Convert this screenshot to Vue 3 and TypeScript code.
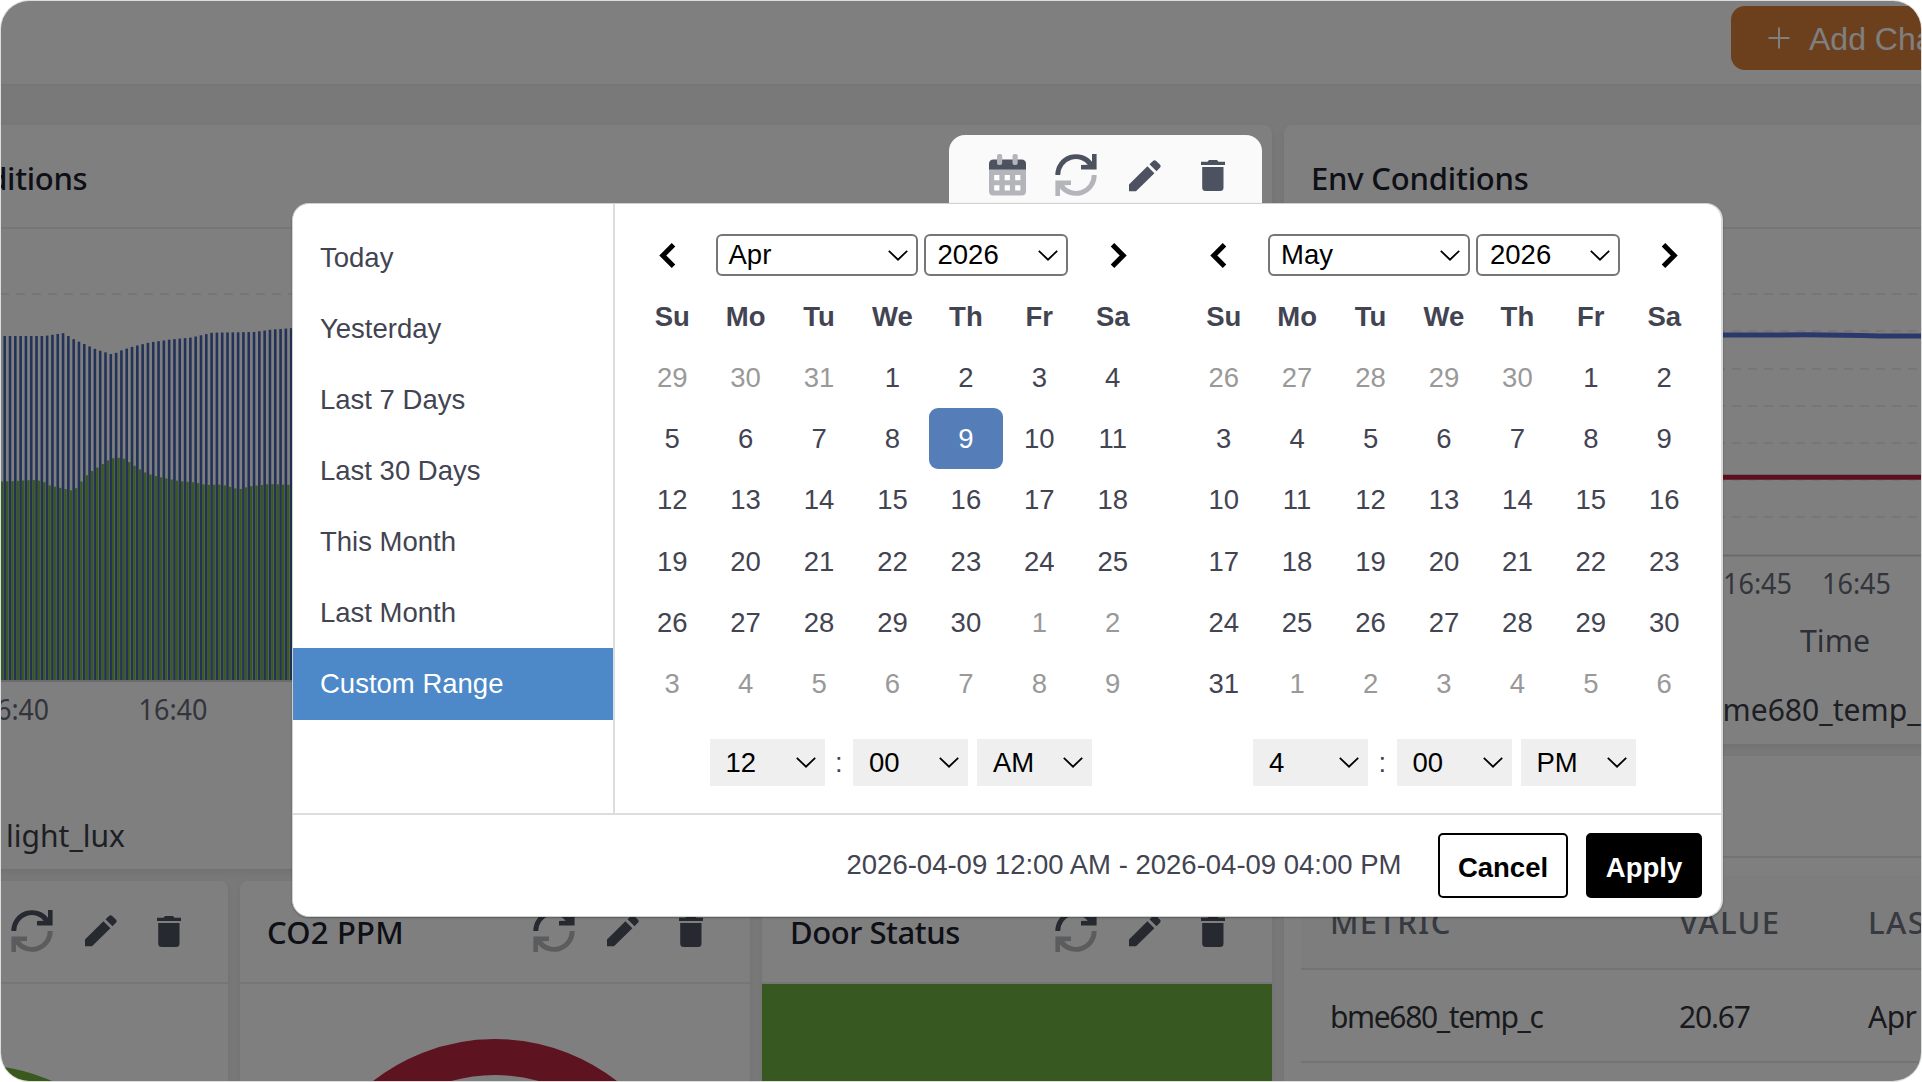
<script setup lang="ts">
import { computed } from 'vue'

interface Day { n: number; off?: boolean; active?: boolean }
interface CalendarPanel {
  id: string
  month: string
  year: string
  weeks: Day[][]
  time: string[]
}

const ranges = ['Today', 'Yesterday', 'Last 7 Days', 'Last 30 Days', 'This Month', 'Last Month', 'Custom Range']
const selectedRange = 'Custom Range'
const weekdays = ['Su', 'Mo', 'Tu', 'We', 'Th', 'Fr', 'Sa']

function buildWeeks(lead: number[], length: number, active?: number): Day[][] {
  const days: Day[] = lead.map((n) => ({ n, off: true }))
  for (let n = 1; n <= length; n++) days.push({ n, active: n === active })
  let next = 1
  while (days.length < 42) days.push({ n: next++, off: true })
  const weeks: Day[][] = []
  for (let i = 0; i < 42; i += 7) weeks.push(days.slice(i, i + 7))
  return weeks
}

const panels: CalendarPanel[] = [
  { id: 'start', month: 'Apr', year: '2026', weeks: buildWeeks([29, 30, 31], 30, 9), time: ['12', '00', 'AM'] },
  { id: 'end', month: 'May', year: '2026', weeks: buildWeeks([26, 27, 28, 29, 30], 31), time: ['4', '00', 'PM'] },
]

type Point = [number, number]
const lightCurve: Point[] = [[0, 336], [43, 336], [63, 333], [69, 337.5], [74, 340], [84, 344.5], [95, 349.5], [103, 352], [111, 354.5], [121, 350], [132, 346.5], [148, 342.5], [169, 339.5], [190, 337.5], [211, 332.7], [253, 332], [269, 329.7], [292, 328]]
const gasCurve: Point[] = [[0, 481.5], [29, 480], [39, 481], [44, 485], [55, 487.5], [70, 491], [76, 484], [80, 478], [86, 472.5], [96, 466], [107, 458.5], [118, 457.5], [123, 460.5], [134, 468], [139, 471.5], [149, 475.5], [165, 479], [175, 481], [192, 482.5], [202, 485], [218, 484.5], [235, 489.5], [245, 486.5], [265, 484], [292, 485]]

function sample(curve: Point[], x: number): number {
  for (let i = 1; i < curve.length; i++) {
    const [x0, y0] = curve[i - 1]
    const [x1, y1] = curve[i]
    if (x <= x1) return y0 + ((y1 - y0) * (x - x0)) / (x1 - x0)
  }
  return curve[curve.length - 1][1]
}

const bars = computed(() =>
  Array.from({ length: 56 }, (_, i) => {
    const x = -1.9 + i * 5.305
    return { x, light: sample(lightCurve, Math.max(0, x)), gas: sample(gasCurve, Math.max(0, x)) }
  }),
)
const gridLines = [294, 331, 369, 406, 443, 480, 517]
</script>

<template>
  <div class="stage">
    <svg class="defs" width="0" height="0" aria-hidden="true">
      <symbol id="i-refresh" viewBox="0 0 42 42">
        <path d="M2.8 21 A18.2 18.2 0 0 1 36 10.5" fill="none" stroke="var(--ink)" stroke-width="4.9" />
        <path d="M37 0h4.6v15.6H26V11l6.8-.3L37 8z" fill="var(--ink)" />
        <path d="M39.2 21 A18.2 18.2 0 0 1 6 31.5" fill="none" stroke="var(--soft)" stroke-width="4.9" />
        <path d="M5 42H.4V26.4H16V31l-6.8.3L5 34z" fill="var(--soft)" />
      </symbol>
      <symbol id="i-pencil" viewBox="0 0 32 32">
        <path d="M0 24.6 18.4 6.2l7 7L7 31.2H0z" fill="var(--ink)" />
        <path d="M20.5 4.3 24 .9q1.6-1.5 3.2 0l3.7 3.7q1.5 1.6 0 3.2l-3.4 3.5z" fill="var(--ink)" />
      </symbol>
      <symbol id="i-trash" viewBox="0 0 24 31">
        <path d="M0 1.8h6.5L8 0h8l1.500 1.800H24V5H0z" fill="var(--ink)" />
        <path d="M1.200 7h21.300v20.500q0 3.500-3.500 3.500H4.700q-3.500 0-3.500-3.500z" fill="var(--ink)" />
      </symbol>
      <symbol id="i-down" viewBox="0 0 20 11">
        <path d="M.8.8 10 9.700 19.200.8" fill="none" stroke="#000" stroke-width="1.800" />
      </symbol>
      <symbol id="i-left" viewBox="0 0 17 25">
        <path d="M14.500 1.800 3.800 12.500l10.700 10.700" fill="none" stroke="#000" stroke-width="5" />
      </symbol>
      <symbol id="i-right" viewBox="0 0 17 25">
        <path d="M2.500 1.800l10.700 10.700L2.500 23.200" fill="none" stroke="#000" stroke-width="5" />
      </symbol>
    </svg>

    <div class="frame">
      <header class="topbar">
        <button class="add">
          <svg width="22" height="22" viewBox="0 0 22 22"><path d="M11 0.500v21M0.500 11h21" stroke="#fff" stroke-width="2" /></svg>
          <span>Add Chart</span>
        </button>
      </header>

      <main class="board">
        <section class="col main-col">
          <article class="card wide">
            <div class="card-head first"><h2 class="clipped">Conditions</h2></div>
            <svg class="plot" width="300" height="640" viewBox="0 229 300 640">
              <line x1="0" x2="300" y1="294" y2="294" class="dash" />
              <g v-for="(b, i) in bars" :key="i">
                <rect :x="b.x" :y="b.light" width="2.600" :height="680.500 - b.light" fill="#4465b0" />
                <rect :x="b.x + 2.500" :y="b.gas" width="2.500" :height="680.500 - b.gas" fill="#77b03f" />
              </g>
              <line x1="0" x2="300" y1="681" y2="681" stroke="#d3d6dc" stroke-width="2" />
              <text x="-19" y="719.800" textLength="68" lengthAdjust="spacingAndGlyphs" class="tick">16:40</text>
              <text x="138.500" y="719.800" textLength="69" lengthAdjust="spacingAndGlyphs" class="tick">16:40</text>
              <text x="6" y="846.800" textLength="119" lengthAdjust="spacingAndGlyphs" class="legend">light_lux</text>
            </svg>
          </article>

          <div class="row">
            <article class="card small">
              <div class="card-head">
                <div class="actions">
                  <svg class="ic refresh"><use href="#i-refresh" /></svg>
                  <svg class="ic pencil"><use href="#i-pencil" /></svg>
                  <svg class="ic trash"><use href="#i-trash" /></svg>
                </div>
              </div>
              <svg class="gauge" width="510" height="97" viewBox="0 984 510 97">
                <circle cx="255" cy="1262.500" r="180" fill="none" stroke="#77b03f" stroke-width="36" />
              </svg>
            </article>
            <article class="card small">
              <div class="card-head">
                <h2 class="t-co2">CO2 PPM</h2>
                <div class="actions">
                  <svg class="ic refresh"><use href="#i-refresh" /></svg>
                  <svg class="ic pencil"><use href="#i-pencil" /></svg>
                  <svg class="ic trash"><use href="#i-trash" /></svg>
                </div>
              </div>
              <svg class="gauge" width="510" height="97" viewBox="0 984 510 97">
                <circle cx="255" cy="1237" r="180" fill="none" stroke="#bb2740" stroke-width="36" />
              </svg>
            </article>
            <article class="card small">
              <div class="card-head">
                <h2 class="t-door">Door Status</h2>
                <div class="actions">
                  <svg class="ic refresh"><use href="#i-refresh" /></svg>
                  <svg class="ic pencil"><use href="#i-pencil" /></svg>
                  <svg class="ic trash"><use href="#i-trash" /></svg>
                </div>
              </div>
              <div class="door"></div>
            </article>
          </div>
        </section>

        <section class="col side-col">
          <article class="card env">
            <div class="card-head first"><h2 class="t-env">Env Conditions</h2></div>
            <svg class="plot" width="638" height="515" viewBox="1284 229 638 515">
              <line v-for="y in gridLines" :key="y" x1="1300" x2="1922" :y1="y" :y2="y" class="dash" />
              <line x1="1300" x2="1922" y1="555.500" y2="555.500" stroke="#d3d6dc" stroke-width="2" />
              <path d="M1300 335h480c50-1.500 70 1.500 142 1" fill="none" stroke="#5470d6" stroke-width="5" />
              <path d="M1300 477.200h622" fill="none" stroke="#b8213f" stroke-width="5" />
              <text x="1723" y="593.700" textLength="69" lengthAdjust="spacingAndGlyphs" class="tick">16:45</text>
              <text x="1822" y="593.700" textLength="69" lengthAdjust="spacingAndGlyphs" class="tick">16:45</text>
              <text x="1800" y="651.700" textLength="70" lengthAdjust="spacingAndGlyphs" class="legend dim">Time</text>
              <text x="1704" y="721" textLength="231" lengthAdjust="spacingAndGlyphs" class="legend">bme680_temp_c</text>
            </svg>
          </article>
          <article class="card metrics">
            <div class="metrics-head"></div>
            <table>
              <thead>
                <tr><th>METRIC</th><th>VALUE</th><th>LAST</th></tr>
              </thead>
              <tbody>
                <tr><td class="name">bme680_temp_c</td><td>20.67</td><td class="when">Apr 9</td></tr>
                <tr class="rest"><td></td><td></td><td></td></tr>
              </tbody>
            </table>
          </article>
        </section>
      </main>

      <div class="backdrop"></div>
    </div>

    <div class="toolbar">
      <svg width="37" height="42" viewBox="0 0 37 42">
        <path d="M0 15h37v22q0 4.500-4.500 4.500h-28Q0 41.500 0 37z" fill="#b3b5ba" />
        <path d="M0 15.500V10q0-4.500 4.500-4.500h28q4.500 0 4.500 4.500v5.500z" fill="#4d5260" />
        <rect x="8" y="0" width="5.200" height="11" rx="2" fill="#b3b5ba" />
        <rect x="23.500" y="0" width="5.200" height="11" rx="2" fill="#b3b5ba" />
        <path d="M5.200 21h5.200v5.200H5.200zM15.700 21h5.200v5.200h-5.200zM26.200 21h5.200v5.200h-5.200zM5.200 31.300h5.200v5.200H5.200zM15.700 31.300h5.200v5.200h-5.200zM26.200 31.300h5.200v5.200h-5.200z" fill="#fff" />
      </svg>
      <svg class="ic refresh"><use href="#i-refresh" /></svg>
      <svg class="ic pencil"><use href="#i-pencil" /></svg>
      <svg class="ic trash"><use href="#i-trash" /></svg>
    </div>

    <div class="picker">
      <div class="picker-body">
        <ul class="ranges">
          <li v-for="r in ranges" :key="r" :class="{ active: r === selectedRange }">{{ r }}</li>
        </ul>
        <div class="calendars">
          <section v-for="p in panels" :key="p.id" class="calendar" :class="p.id">
            <div class="nav">
              <span class="arrow prev"><svg width="17" height="25"><use href="#i-left" /></svg></span>
              <span class="pick month">{{ p.month }}<svg width="20" height="11"><use href="#i-down" /></svg></span>
              <span class="pick year">{{ p.year }}<svg width="20" height="11"><use href="#i-down" /></svg></span>
              <span class="arrow next"><svg width="17" height="25"><use href="#i-right" /></svg></span>
            </div>
            <div class="week head"><span v-for="d in weekdays" :key="d">{{ d }}</span></div>
            <div v-for="(w, wi) in p.weeks" :key="wi" class="week">
              <span v-for="(d, di) in w" :key="di" :class="{ off: d.off, active: d.active }">{{ d.n }}</span>
            </div>
            <div class="time">
              <span class="tsel">{{ p.time[0] }}<svg width="20" height="11"><use href="#i-down" /></svg></span>
              <span class="colon">:</span>
              <span class="tsel">{{ p.time[1] }}<svg width="20" height="11"><use href="#i-down" /></svg></span>
              <span class="tsel last">{{ p.time[2] }}<svg width="20" height="11"><use href="#i-down" /></svg></span>
            </div>
          </section>
        </div>
      </div>
      <footer class="picker-foot">
        <span class="summary">2026-04-09 12:00 AM - 2026-04-09 04:00 PM</span>
        <button class="btn cancel">Cancel</button>
        <button class="btn apply">Apply</button>
      </footer>
    </div>
  </div>
</template>

<style>
html, body { margin: 0; background: #fff; overflow: hidden; }
</style>

<style scoped>
* { box-sizing: border-box; }
.stage {
  position: relative;
  width: 1922px;
  height: 1082px;
  padding: 1px;
  overflow: hidden;
  background: #fff;
  font-family: "Liberation Sans", Arial, sans-serif;
}
.defs { position: absolute; }
.frame {
  position: relative;
  width: 1920px;
  height: 1080px;
  overflow: hidden;
  border-radius: 28px;
  background: #f3f3f4;
  box-shadow: 0 0 0 1px #dcdedd;
  font-family: "Noto Sans", "Open Sans", sans-serif;
}
.backdrop { position: absolute; inset: 0; background: rgba(0, 0, 0, .5); }

.topbar {
  display: flex;
  height: 85px;
  padding: 5px 0 0 1730px;
  background: #fff;
  border-bottom: 2px solid #ebecee;
}
.add {
  display: flex;
  flex: none;
  align-items: center;
  gap: 19px;
  width: 240px;
  height: 64px;
  padding: 0 0 0 37px;
  border: 0;
  border-radius: 14px;
  background: #d8803a;
  color: #fff;
  font: 32px/64px "Liberation Sans", Arial, sans-serif;
  white-space: nowrap;
}
.add span { padding-top: 1px; }

.board {
  display: flex;
  gap: 12px;
  width: 2240px;
  margin: 39px 0 0 -283px;
}
.col { display: flex; flex-direction: column; gap: 12px; }
.main-col { width: 1554px; }
.side-col { width: 674px; }
.card {
  overflow: hidden;
  border-radius: 8px;
  background: #fff;
  box-shadow: 0 3px 8px rgba(0, 0, 0, .08);
}
.wide { height: 744px; }
.env { height: 619px; }
.metrics { height: 400px; padding-left: 17px; }
.row { display: flex; gap: 12px; }
.small { width: 510px; height: 240px; }

.card-head {
  display: flex;
  align-items: center;
  justify-content: space-between;
  height: 103px;
  padding: 0 47px 0 27px;
  border-bottom: 2px solid #ecedef;
}
.card-head.first { height: 104px; padding-top: 3px; }
.actions { display: flex; align-items: center; margin-left: auto; height: 42px; margin-top: -1px; }
h2 {
  margin: 0;
  color: #1d2130;
  font-size: 31px;
  font-weight: 500;
  line-height: 40px;
  white-space: nowrap;
}
.clipped { margin-left: 186px; letter-spacing: -.3px; }
.t-env { letter-spacing: -.2px; }
.t-co2 { letter-spacing: .2px; }
.t-door { padding-left: 1px; letter-spacing: -.45px; }
.plot { display: block; }
.wide .plot { margin-left: 282px; }
.gauge { display: block; }
.door { height: 137px; background: #71b145; }

.dash { stroke: #ededf0; stroke-width: 2; stroke-dasharray: 9 7; }
.tick { font-size: 28.500px; fill: #666b7a; }
.legend { font-size: 31px; fill: #3b3f4b; }
.legend.dim { fill: #5a5f6c; }

.metrics-head { height: 102px; margin-left: -17px; border-bottom: 2px solid #e6e7ea; margin-bottom: 18px; }
table { width: 657px; border-collapse: collapse; table-layout: fixed; }
th, td { padding: 0 0 0 29px; text-align: left; white-space: nowrap; border-bottom: 2px solid #e6e7ea; }
th:nth-child(1) { width: 349px; }
th:nth-child(2) { width: 189px; }
th { height: 93px; background: #fbfbfc; color: #6f7480; font-size: 31px; font-weight: 500; letter-spacing: 1.400px; }
td { height: 93px; color: #33353c; font-size: 30px; letter-spacing: -1.200px; padding-top: 2px; }
td.name { letter-spacing: -1.350px; }
td.when { letter-spacing: -.5px; }

.ic { --ink: #4d5260; --soft: #b3b5ba; flex: none; }
.card .ic { --ink: #4d5260; --soft: #b6b8bb; }
.ic.refresh { width: 42px; height: 42px; }
.ic.pencil { width: 32px; height: 32px; margin-left: 32px; }
.ic.trash { width: 24px; height: 31px; margin-left: 40px; }

.toolbar {
  position: absolute;
  left: 949px;
  top: 135px;
  display: flex;
  align-items: flex-start;
  width: 313px;
  height: 84px;
  padding: 19px 0 0 40px;
  border-radius: 16px 16px 0 0;
  background: #fafafa;
}
.toolbar .refresh { margin-left: 29px; }
.toolbar .pencil, .toolbar .trash { margin-top: 6px; }

.picker {
  position: absolute;
  left: 292px;
  top: 203px;
  width: 1431px;
  height: 714px;
  overflow: hidden;
  border: 1px solid #cfd1d1;
  border-right: 2px solid #d8dada;
  border-radius: 17px;
  background: #fff;
  color: #424452;
  font-size: 27.500px;
  box-shadow: 0 1px 2px rgba(0, 0, 0, .3);
}
.picker-body { display: flex; height: 611px; border-bottom: 2px solid #dcdddd; }
.ranges {
  width: 322px;
  margin: 0;
  padding: 18px 0 0;
  border-right: 2px solid #dcdddd;
  list-style: none;
}
.ranges li { height: 71px; padding-left: 27px; line-height: 72px; }
.ranges li.active { height: 72px; background: #4d88c8; color: #fff; }

.calendars { display: flex; gap: 37.500px; padding: 20px 0 0 20.500px; }
.calendar { width: 514px; }
.nav { display: flex; align-items: center; height: 61.500px; padding-top: 1px; }
.arrow { display: flex; }
.prev { width: 80px; padding-left: 23px; }
.next { flex: 1; justify-content: flex-end; padding-right: 23px; }
.pick {
  display: flex;
  align-items: center;
  justify-content: space-between;
  height: 42px;
  padding: 0 8px 0 11px;
  border: 2px solid #767676;
  border-radius: 6px;
  color: #000;
}
.month { width: 202px; }
.year { width: 144px; margin-left: 6px; padding-left: 12px; }
.week { display: flex; height: 61.250px; }
.week span { flex: 1; text-align: center; line-height: 62px; }
.week.head { font-weight: 700; }
.week .off { color: #999; }
.week .active { border-radius: 9px; background: #557db8; color: #fff; }
.time { display: flex; align-items: center; height: 47px; margin: 25px 0 0 74px; }
.end .time { margin-left: 66px; }
.end .prev { width: 81px; }
.tsel {
  display: flex;
  align-items: center;
  justify-content: space-between;
  width: 115px;
  height: 47px;
  padding: 0 9px 0 16px;
  background: #efefef;
  color: #000;
}
.tsel.last { margin-left: 9px; }
.colon { width: 28.500px; text-align: center; }

.picker-foot { display: flex; align-items: center; justify-content: flex-end; height: 101px; padding: 0 19px 0 0; }
.summary { margin: -2px 36.500px 0 0; white-space: nowrap; }
.btn {
  height: 65px;
  border: 2px solid #000;
  border-radius: 5px;
  font: 700 27.500px/60px "Liberation Sans", Arial, sans-serif;
  padding: 3px 0 0;
}
.cancel { width: 130px; background: #fff; color: #000; }
.apply { width: 116px; margin-left: 18px; background: #000; color: #fff; }
</style>
